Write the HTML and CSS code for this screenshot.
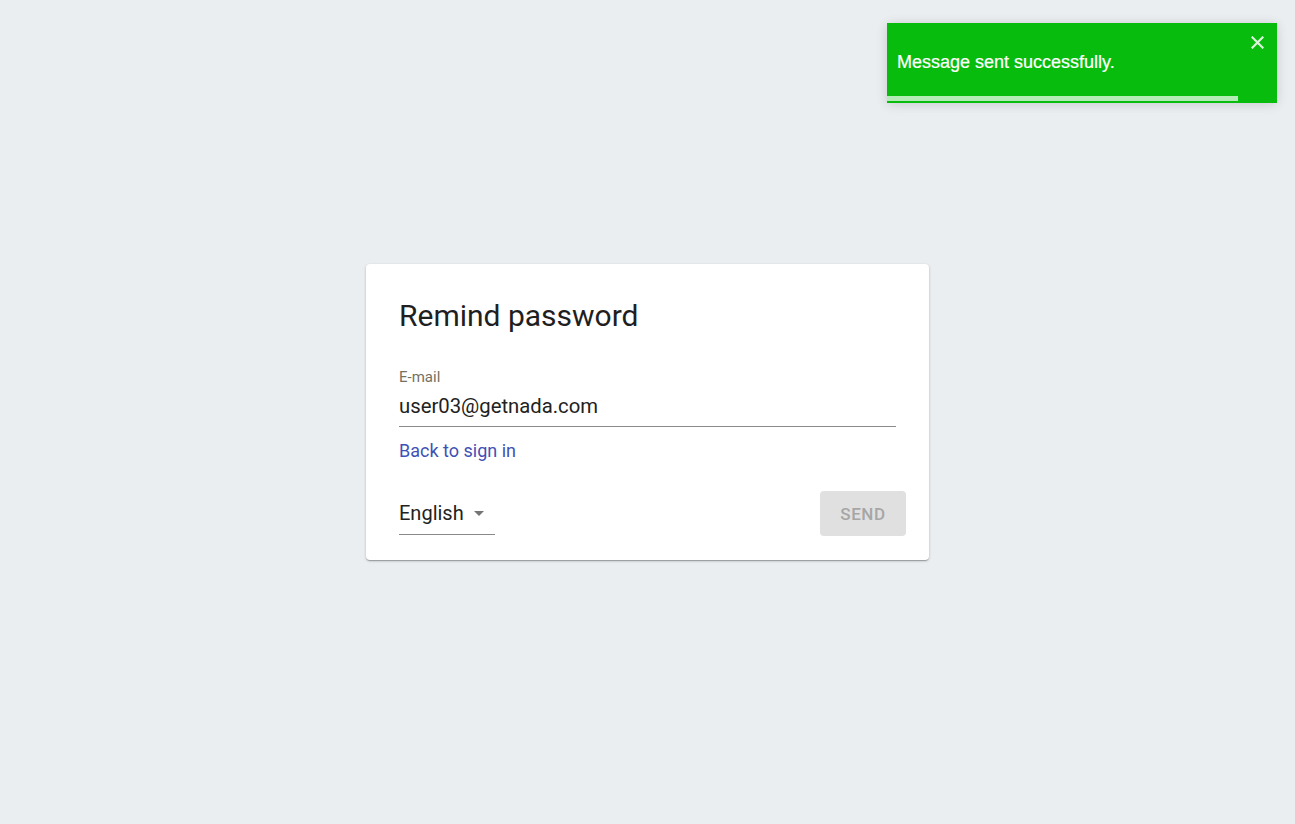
FILE: index.html
```html
<!DOCTYPE html>
<html>
<head>
<meta charset="utf-8">
<link rel="stylesheet" href="styles.css">
</head>
<body>
<div class="page">
  <div class="card">
    <h1 class="title">Remind password</h1>
    <div class="field">
      <label class="label">E-mail</label>
      <div class="input">user03@getnada.com</div>
    </div>
    <a class="link" href="#">Back to sign in</a>
    <div class="actions">
      <div class="select">
        <span class="select-text">English</span>
        <svg class="caret" width="24" height="24" viewBox="0 0 24 24"><path d="M7 10l5 5 5-5z" fill="#757575"/></svg>
      </div>
      <button class="send">Send</button>
    </div>
  </div>
</div>
<div class="toast">
  <div class="toast-body">Message sent successfully.</div>
  <svg class="toast-close" width="13" height="13" viewBox="0 0 13 13"><path d="M1.5 1.5L11.5 11.5M11.5 1.5L1.5 11.5" stroke="#fff" stroke-width="2.2" stroke-linecap="square"/></svg>
  <div class="toast-progress"></div>
</div>
</body>
</html>
```
FILE: styles.css
```css
html, body {
  margin: 0;
  padding: 0;
  height: 100%;
}
body {
  background: #eaeef1;
  font-family: Roboto, "Liberation Sans", sans-serif;
}
.page {
  height: 100%;
  display: flex;
  align-items: center;
  justify-content: center;
}
.card {
  box-sizing: border-box;
  width: 563px;
  height: 296px;
  background: #fff;
  border-radius: 4px;
  box-shadow: 0 1px 3px rgba(0,0,0,0.2), 0 1px 1px rgba(0,0,0,0.14), 0 2px 1px -1px rgba(0,0,0,0.12);
  padding: 33px 33px 0 33px;
  display: flex;
  flex-direction: column;
}
.title {
  margin: 0;
  font-weight: 400;
  font-size: 30px;
  line-height: 38px;
  color: #1f1f1f;
}
.field {
  margin-top: 33px;
  border-bottom: 1px solid #8a8a8a;
  padding-bottom: 8px;
}
.label {
  display: block;
  font-size: 15px;
  line-height: 18px;
  color: #75715f;
}
.input {
  font-size: 20.3px;
  line-height: 24px;
  margin-top: 8px;
  color: #222;
}
.link {
  margin-top: 13px;
  font-size: 18px;
  line-height: 22px;
  color: #3f51b5;
  text-decoration: none;
  align-self: flex-start;
}
.actions {
  margin-top: 31px;
  margin-right: -10px;
  display: flex;
  justify-content: space-between;
  align-items: flex-start;
}
.select {
  width: 96px;
  box-sizing: border-box;
  display: flex;
  align-items: center;
  border-bottom: 1px solid #8a8a8a;
  height: 43px;
  margin-top: -1px;
}
.select-text {
  font-size: 20px;
  color: #222;
}
.caret {
  margin-left: 3px;
}
.send {
  width: 86px;
  height: 45px;
  margin-top: -2px;
  border: none;
  border-radius: 4px;
  background: #e0e0e0;
  color: #a6a6a6;
  font-family: Roboto, "Liberation Sans", sans-serif;
  font-size: 17px;
  font-weight: 500;
  letter-spacing: 0.6px;
  text-transform: uppercase;
  padding: 0;
}
.toast {
  position: absolute;
  top: 23px;
  left: 887px;
  width: 390px;
  height: 80px;
  box-sizing: border-box;
  background: #07bc0c;
  box-shadow: 0 1px 10px rgba(0,0,0,0.1), 0 2px 15px rgba(0,0,0,0.05);
  font-family: "Liberation Sans", Arial, sans-serif;
  color: #fff;
}
.toast-body {
  position: absolute;
  left: 10px;
  top: 29px;
  font-size: 18px;
  line-height: 20px;
  -webkit-text-stroke: 0.2px #fff;
}
.toast-close {
  position: absolute;
  right: 13px;
  top: 13px;
  opacity: 0.85;
}
.toast-progress {
  position: absolute;
  left: 0;
  bottom: 2px;
  height: 5px;
  width: 351px;
  background: rgba(255,255,255,0.7);
}
```
